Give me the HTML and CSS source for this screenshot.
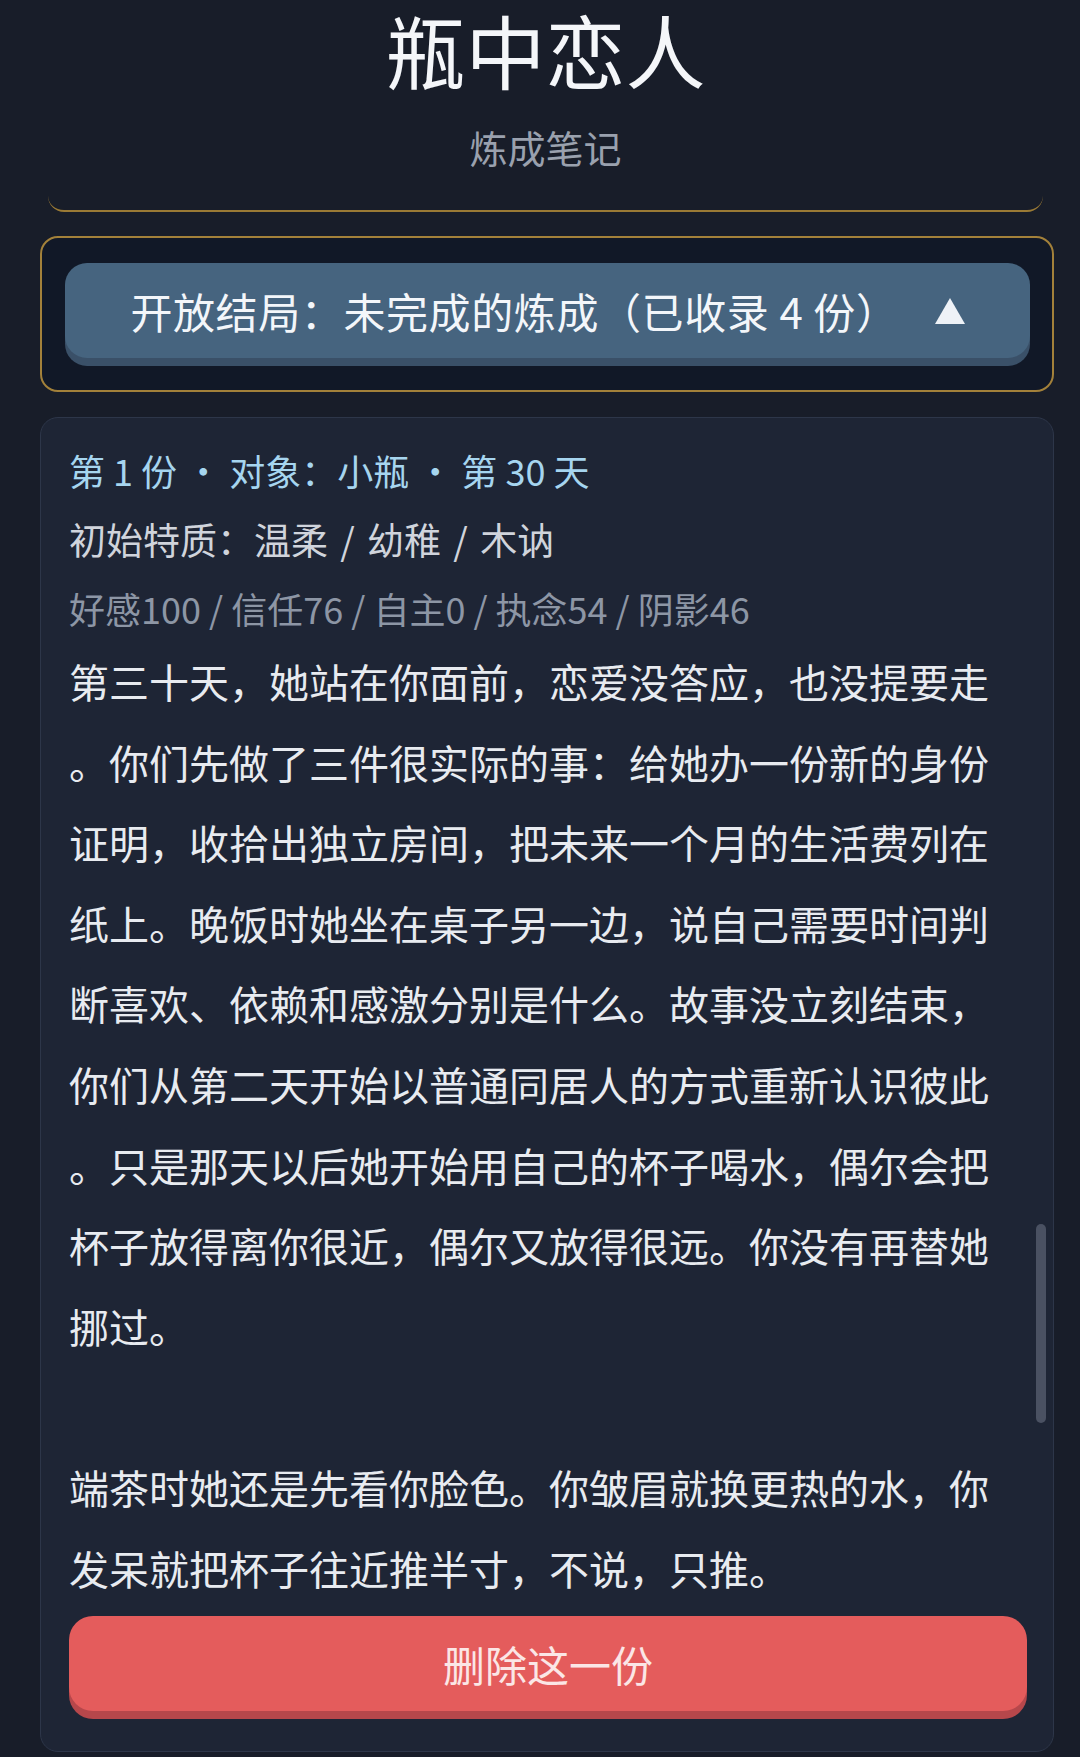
FILE: index.html
```html
<!DOCTYPE html>
<html lang="zh-CN">
<head>
<meta charset="utf-8">
<title>瓶中恋人</title>
<link rel="stylesheet" href="styles.css">
</head>
<body>
<div class="page">
  <header class="header">
    <h1 class="title">瓶中恋人</h1>
    <div class="subtitle">炼成笔记</div>
  </header>

  <section class="ending-box">
    <button class="ending-toggle">
      <span class="ending-label">开放结局：未完成的炼成（已收录 4 份）</span>
      <svg class="caret" width="30" height="26" viewBox="0 0 30 26"><polygon points="15,0 30,26 0,26" fill="#eef2f7"/></svg>
    </button>
  </section>

  <article class="record">
    <div class="meta-title">第 1 份 · 对象：小瓶 · 第 30 天</div>
    <div class="meta-traits">初始特质：温柔 / 幼稚 / 木讷</div>
    <div class="meta-stats">好感100 / 信任76 / 自主0 / 执念54 / 阴影46</div>
    <div class="story">
      <p>第三十天，她站在你面前，恋爱没答应，也没提要走。你们先做了三件很实际的事：给她办一份新的身份证明，收拾出独立房间，把未来一个月的生活费列在纸上。晚饭时她坐在桌子另一边，说自己需要时间判断喜欢、依赖和感激分别是什么。故事没立刻结束，你们从第二天开始以普通同居人的方式重新认识彼此。只是那天以后她开始用自己的杯子喝水，偶尔会把杯子放得离你很近，偶尔又放得很远。你没有再替她挪过。</p>
      <p>端茶时她还是先看你脸色。你皱眉就换更热的水，你发呆就把杯子往近推半寸，不说，只推。</p>
    </div>
    <button class="delete-btn">删除这一份</button>
    <div class="scroll-thumb"></div>
  </article>
</div>
</body>
</html>
```

FILE: styles.css
```css
html, body {
  margin: 0;
  padding: 0;
  background: #181d29;
}

body {
  font-family: "Noto Sans CJK SC", "Noto Sans", sans-serif;
  color: #e8ebf0;
}

.page {
  padding: 0 26px 0 40px;
}

.header {
  margin: 0 11px 0 8px;
  padding: 3px 0 38px;
  border-bottom: 2px solid #9a7a35;
  border-radius: 0 0 16px 16px;
  text-align: center;
}

.title {
  margin: 0;
  font-size: 80px;
  line-height: 90px;
  font-weight: 400;
  color: #f4f6f9;
}

.subtitle {
  margin-top: 29px;
  font-size: 38px;
  line-height: 50px;
  color: #9aa1ae;
}

.ending-box {
  margin-top: 24px;
  border: 2px solid #a3813a;
  border-radius: 18px;
  background: #111827;
  padding: 25px 22px 24px 23px;
}

.ending-toggle {
  display: flex;
  width: 100%;
  height: 95px;
  align-items: center;
  justify-content: center;
  gap: 36px;
  border: none;
  border-radius: 22px;
  background: #46647f;
  box-shadow: 0 8px 0 #3a5068;
  font-family: inherit;
  font-size: 42px;
  color: #f3f6fa;
  padding: 0;
  margin-bottom: 8px;
}

.ending-label {
  line-height: 50px;
  letter-spacing: 0.6px;
}

.caret {
  display: block;
}

.record {
  position: relative;
  margin-top: 25px;
  border: 1px solid #2d3649;
  border-radius: 18px;
  background: #1e2535;
  padding: 18px 26px 40px 28px;
}

.meta-title,
.meta-traits,
.meta-stats {
  font-size: 36px;
  line-height: 69px;
}

.meta-title {
  color: #a6d5ef;
}

.meta-traits {
  font-size: 37px;
  word-spacing: 4px;
  color: #d0d4dc;
}

.meta-stats {
  color: #8d96a5;
}

.story {
  margin-top: -2px;
  font-size: 40px;
  line-height: 80.6px;
  color: #e8ebf0;
  line-break: anywhere;
  word-break: break-all;
}

.story p {
  margin: 0 0 80.6px;
}

.story p:last-child {
  margin-bottom: 0;
}

.delete-btn {
  display: block;
  width: 100%;
  height: 95px;
  margin-top: 8px;
  border: none;
  border-radius: 24px;
  background: #e45c5c;
  box-shadow: 0 8px 0 #b6474b;
  font-family: inherit;
  font-size: 42px;
  color: #fbe6e6;
}

.scroll-thumb {
  position: absolute;
  left: 995px;
  top: 806px;
  width: 10px;
  height: 199px;
  border-radius: 5px;
  background: #4a5162;
}
```
